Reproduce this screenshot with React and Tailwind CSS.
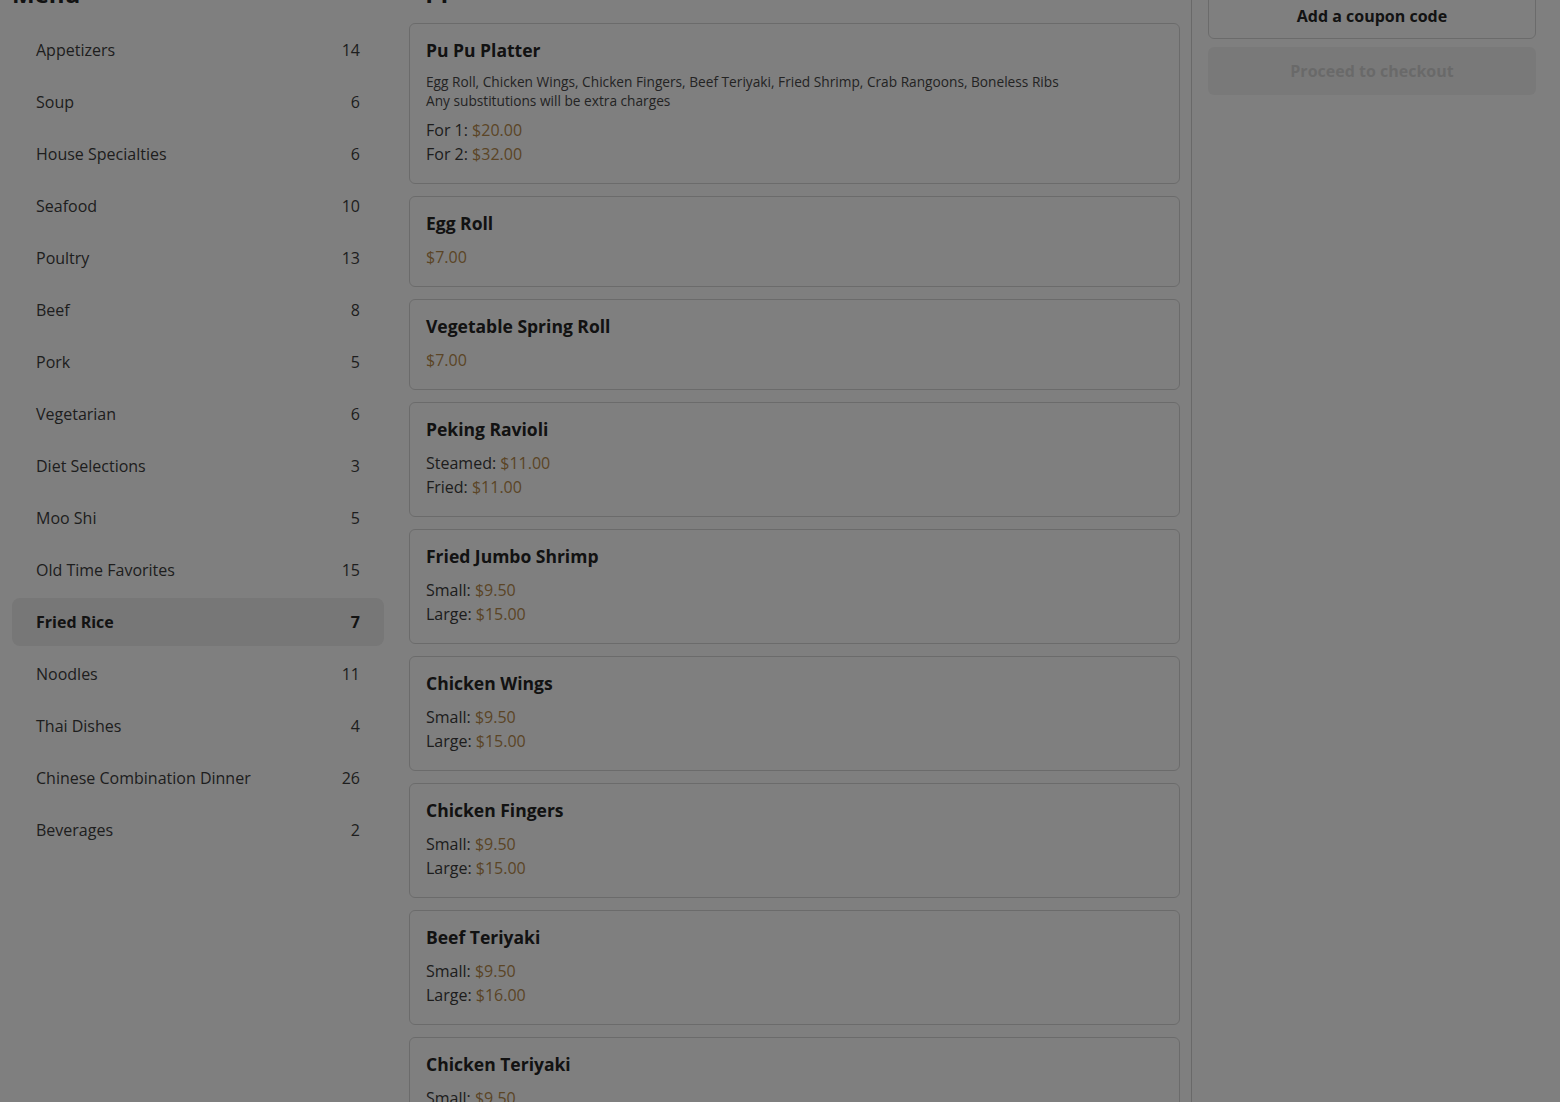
import React from "react";

const categories = [
  ["Appetizers", 14],
  ["Soup", 6],
  ["House Specialties", 6],
  ["Seafood", 10],
  ["Poultry", 13],
  ["Beef", 8],
  ["Pork", 5],
  ["Vegetarian", 6],
  ["Diet Selections", 3],
  ["Moo Shi", 5],
  ["Old Time Favorites", 15],
  ["Fried Rice", 7],
  ["Noodles", 11],
  ["Thai Dishes", 4],
  ["Chinese Combination Dinner", 26],
  ["Beverages", 2],
];

const items = [
  {
    name: "Pu Pu Platter",
    desc: [
      "Egg Roll, Chicken Wings, Chicken Fingers, Beef Teriyaki, Fried Shrimp, Crab Rangoons, Boneless Ribs",
      "Any substitutions will be extra charges",
    ],
    prices: [["For 1", "$20.00"], ["For 2", "$32.00"]],
  },
  { name: "Egg Roll", prices: [[null, "$7.00"]] },
  { name: "Vegetable Spring Roll", prices: [[null, "$7.00"]] },
  { name: "Peking Ravioli", prices: [["Steamed", "$11.00"], ["Fried", "$11.00"]] },
  { name: "Fried Jumbo Shrimp", prices: [["Small", "$9.50"], ["Large", "$15.00"]] },
  { name: "Chicken Wings", prices: [["Small", "$9.50"], ["Large", "$15.00"]] },
  { name: "Chicken Fingers", prices: [["Small", "$9.50"], ["Large", "$15.00"]] },
  { name: "Beef Teriyaki", prices: [["Small", "$9.50"], ["Large", "$16.00"]] },
  { name: "Chicken Teriyaki", prices: [["Small", "$9.50"], ["Large", "$15.00"]] },
  { name: "Crab Rangoons", prices: [["Small", "$8.50"], ["Large", "$14.00"]] },
  { name: "Boneless Ribs", prices: [["Small", "$10.50"], ["Large", "$17.00"]] },
];

function Card({ item }) {
  return (
    <div className="rounded-md border border-[#d7d7d7] bg-white px-4 pt-[14px] pb-[17px]">
      <div className="text-[17.5px] leading-6 font-bold text-[#242424]">{item.name}</div>
      {item.desc && (
        <div className="mt-[10px] text-[13.7px] leading-[19px] text-[#474747]">
          {item.desc.map((d, i) => (
            <div key={i}>{d}</div>
          ))}
        </div>
      )}
      <div className={item.desc ? "mt-2" : "mt-[10px]"}>
        {item.prices.map(([label, price], i) => (
          <div key={i} className="text-base leading-6 text-[#3a3a3a]">
            {label && <span>{label}: </span>}
            <span className="text-[#b68a4c]">{price}</span>
          </div>
        ))}
      </div>
    </div>
  );
}

export default function App() {
  return (
    <div
      className="relative min-h-screen bg-white"
      style={{ fontFamily: "'Open Sans', 'Noto Sans', sans-serif" }}
    >
      <div className="-mt-[24px] flex">
        <div className="w-[384px] shrink-0 pl-3 pt-[2px]">
          <div className="h-8 text-2xl leading-8 font-bold text-[#242424]">Menu</div>
          <div className="mt-[16px] flex flex-col gap-1">
            {categories.map(([name, count]) => {
              const active = name === "Fried Rice";
              return (
                <div
                  key={name}
                  className={
                    active
                      ? "flex h-12 items-center justify-between rounded-lg bg-[#eeeeee] px-6 text-base font-bold text-[#262626]"
                      : "flex h-12 items-center justify-between rounded-lg px-6 text-base text-[#3c3c3c]"
                  }
                >
                  <span>{name}</span>
                  <span>{count}</span>
                </div>
              );
            })}
          </div>
        </div>
        <div className="ml-[25px] w-[771px] shrink-0">
          <div className="-mt-[4px] h-8 text-2xl leading-8 font-bold text-[#242424]">Appetizers</div>
          <div className="mt-[19px] flex flex-col gap-3">
            {items.map((it) => (
              <Card key={it.name} item={it} />
            ))}
          </div>
        </div>
        <div className="ml-[11px] min-h-[1200px] flex-1 border-l border-[#d2d2d2] pl-4 pr-6 pt-[15px]">
          <div className="flex h-12 items-center justify-center rounded-md border border-[#d7d7d7] pt-[2px] text-base font-bold text-[#262626]">
            Add a coupon code
          </div>
          <div className="mt-2 flex h-12 items-center justify-center rounded-md bg-[#f3f3f3] text-base font-bold text-[#d3d3d3]">
            Proceed to checkout
          </div>
        </div>
      </div>
      <div className="fixed inset-0 bg-black/50" />
    </div>
  );
}
